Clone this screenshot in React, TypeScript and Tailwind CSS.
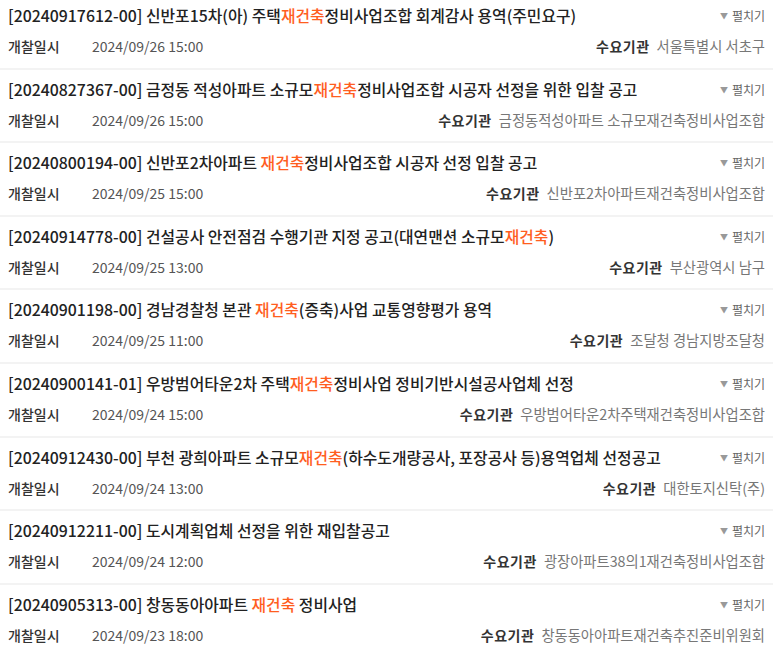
const rows = [
  { no: "20240917612-00", pre: "신반포15차(아) 주택", post: "정비사업조합 회계감사 용역(주민요구)", date: "2024/09/26 15:00", org: "서울특별시 서초구" },
  { no: "20240827367-00", pre: "금정동 적성아파트 소규모", post: "정비사업조합 시공자 선정을 위한 입찰 공고", date: "2024/09/26 15:00", org: "금정동적성아파트 소규모재건축정비사업조합" },
  { no: "20240800194-00", pre: "신반포2차아파트 ", post: "정비사업조합 시공자 선정 입찰 공고", date: "2024/09/25 15:00", org: "신반포2차아파트재건축정비사업조합" },
  { no: "20240914778-00", pre: "건설공사 안전점검 수행기관 지정 공고(대연맨션 소규모", post: ")", date: "2024/09/25 13:00", org: "부산광역시 남구" },
  { no: "20240901198-00", pre: "경남경찰청 본관 ", post: "(증축)사업 교통영향평가 용역", date: "2024/09/25 11:00", org: "조달청 경남지방조달청" },
  { no: "20240900141-01", pre: "우방범어타운2차 주택", post: "정비사업 정비기반시설공사업체 선정", date: "2024/09/24 15:00", org: "우방범어타운2차주택재건축정비사업조합" },
  { no: "20240912430-00", pre: "부천 광희아파트 소규모", post: "(하수도개량공사, 포장공사 등)용역업체 선정공고", date: "2024/09/24 13:00", org: "대한토지신탁(주)" },
  { no: "20240912211-00", pre: "도시계획업체 선정을 위한 재입찰공고", post: "", date: "2024/09/24 12:00", org: "광장아파트38의1재건축정비사업조합", noKeyword: true },
  { no: "20240905313-00", pre: "창동동아아파트 ", post: " 정비사업", date: "2024/09/23 18:00", org: "창동동아아파트재건축추진준비위원회" },
];

export default function App() {
  return (
    <div
      className="h-[654px] w-[773px] overflow-hidden bg-white"
      style={{ fontFamily: '"Noto Sans CJK KR", "Noto Sans", sans-serif' }}
    >
      <ul className="-mt-[4px]">
        {rows.map((r) => (
          <li
            key={r.no}
            className="flex h-[73.6px] flex-col border-b-2 border-[#f3f3f3] pl-[8px] pr-[8px] pt-[8px]"
          >
            <div className="flex h-[24px] items-center justify-between">
              <p className="truncate text-[15.85px] font-medium leading-[24px] text-[#222]">
                [{r.no}] {r.pre}
                {!r.noKeyword && <span className="text-[#ff5e1f]">재건축</span>}
                {r.post}
              </p>
              <button className="flex shrink-0 items-center gap-[4px] text-[12px] leading-none text-[#666]">
                <span className="text-[8px] text-[#999]">▼</span>
                펼치기
              </button>
            </div>
            <div className="mt-[8px] flex h-[20px] items-center justify-between text-[14px] leading-[20px]">
              <div className="flex items-center">
                <span className="w-[84px] font-medium text-[#333]">개찰일시</span>
                <span className="text-[#555]">{r.date}</span>
              </div>
              <div className="flex items-center gap-[7px]">
                <span className="font-bold tracking-[0.5px] text-[#333]">수요기관</span>
                <span className="text-[14.3px] text-[#777]">{r.org}</span>
              </div>
            </div>
          </li>
        ))}
      </ul>
    </div>
  );
}
